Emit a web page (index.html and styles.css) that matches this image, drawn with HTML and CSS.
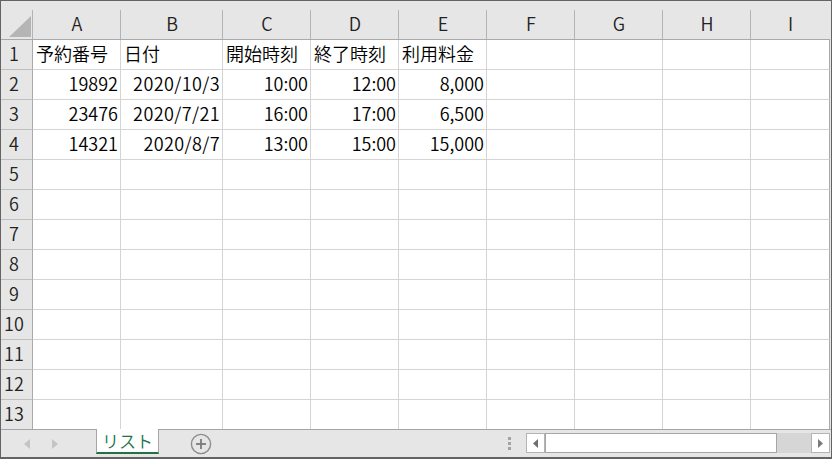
FILE: index.html
```html
<!DOCTYPE html>
<html lang="ja">
<head>
<meta charset="utf-8">
<title>リスト</title>
<link rel="stylesheet" href="styles.css">
</head>
<body>
<div class="window">
  <div class="sheet">
    <div class="corner"><svg class="tri" width="22" height="21" viewBox="0 0 22 21"><polygon points="0,21 22,0 22,21" fill="#b5b5b5"/></svg></div>
    <div class="ch">A</div><div class="ch">B</div><div class="ch">C</div><div class="ch">D</div><div class="ch">E</div><div class="ch">F</div><div class="ch">G</div><div class="ch">H</div><div class="ch last-col">I</div>

    <div class="rh">1</div><div class="c">予約番号</div><div class="c">日付</div><div class="c">開始時刻</div><div class="c">終了時刻</div><div class="c">利用料金</div><div class="c"></div><div class="c"></div><div class="c"></div><div class="c end"></div>
    <div class="rh">2</div><div class="c n">19892</div><div class="c n date">2020/10/3</div><div class="c n">10:00</div><div class="c n">12:00</div><div class="c n">8,000</div><div class="c"></div><div class="c"></div><div class="c"></div><div class="c end"></div>
    <div class="rh">3</div><div class="c n">23476</div><div class="c n date">2020/7/21</div><div class="c n">16:00</div><div class="c n">17:00</div><div class="c n">6,500</div><div class="c"></div><div class="c"></div><div class="c"></div><div class="c end"></div>
    <div class="rh">4</div><div class="c n">14321</div><div class="c n date">2020/8/7</div><div class="c n">13:00</div><div class="c n">15:00</div><div class="c n">15,000</div><div class="c"></div><div class="c"></div><div class="c"></div><div class="c end"></div>
    <div class="rh">5</div><div class="c"></div><div class="c"></div><div class="c"></div><div class="c"></div><div class="c"></div><div class="c"></div><div class="c"></div><div class="c"></div><div class="c end"></div>
    <div class="rh">6</div><div class="c"></div><div class="c"></div><div class="c"></div><div class="c"></div><div class="c"></div><div class="c"></div><div class="c"></div><div class="c"></div><div class="c end"></div>
    <div class="rh">7</div><div class="c"></div><div class="c"></div><div class="c"></div><div class="c"></div><div class="c"></div><div class="c"></div><div class="c"></div><div class="c"></div><div class="c end"></div>
    <div class="rh">8</div><div class="c"></div><div class="c"></div><div class="c"></div><div class="c"></div><div class="c"></div><div class="c"></div><div class="c"></div><div class="c"></div><div class="c end"></div>
    <div class="rh">9</div><div class="c"></div><div class="c"></div><div class="c"></div><div class="c"></div><div class="c"></div><div class="c"></div><div class="c"></div><div class="c"></div><div class="c end"></div>
    <div class="rh">10</div><div class="c"></div><div class="c"></div><div class="c"></div><div class="c"></div><div class="c"></div><div class="c"></div><div class="c"></div><div class="c"></div><div class="c end"></div>
    <div class="rh">11</div><div class="c"></div><div class="c"></div><div class="c"></div><div class="c"></div><div class="c"></div><div class="c"></div><div class="c"></div><div class="c"></div><div class="c end"></div>
    <div class="rh">12</div><div class="c"></div><div class="c"></div><div class="c"></div><div class="c"></div><div class="c"></div><div class="c"></div><div class="c"></div><div class="c"></div><div class="c end"></div>
    <div class="rh bottom">13</div><div class="c bottom"></div><div class="c bottom"></div><div class="c bottom"></div><div class="c bottom"></div><div class="c bottom"></div><div class="c bottom"></div><div class="c bottom"></div><div class="c bottom"></div><div class="c end bottom"></div>
  </div>

  <div class="bar">
    <div class="nav">
      <svg width="6" height="10" viewBox="0 0 6 10"><polygon points="6,0 0,5 6,10" fill="#c4c4c4"/></svg>
      <svg width="6" height="10" viewBox="0 0 6 10"><polygon points="0,0 6,5 0,10" fill="#c4c4c4"/></svg>
    </div>
    <div class="tab">リスト</div>
    <svg class="add" width="22" height="22" viewBox="0 0 22 22">
      <circle cx="11" cy="11" r="9.6" fill="none" stroke="#8c8c8c" stroke-width="1.4"/>
      <line x1="6" y1="11" x2="16" y2="11" stroke="#7a7a7a" stroke-width="1.8"/>
      <line x1="11" y1="6" x2="11" y2="16" stroke="#7a7a7a" stroke-width="1.8"/>
    </svg>
    <div class="spacer"></div>
    <div class="dots"><span></span><span></span><span></span></div>
    <div class="hscroll">
      <div class="sbtn"><svg width="5" height="9" viewBox="0 0 5 9"><polygon points="5,0 0,4.5 5,9" fill="#6f6f6f"/></svg></div>
      <div class="track"><div class="thumb"></div></div>
      <div class="sbtn"><svg width="5" height="9" viewBox="0 0 5 9"><polygon points="0,0 5,4.5 0,9" fill="#7a7a7a"/></svg></div>
    </div>
  </div>
</div>
</body>
</html>
```
FILE: styles.css
```css
* { box-sizing: border-box; }
html, body { margin: 0; padding: 0; }
body {
  width: 832px;
  height: 459px;
  overflow: hidden;
  background: #e6e6e6;
  font-family: "Noto Sans CJK JP", "Noto Sans", sans-serif;
  font-weight: 350;
}
.window {
  width: 832px;
  height: 459px;
  border: 1px solid #646464;
  border-bottom-width: 2px;
  background: #e6e6e6;
  display: flex;
  flex-direction: column;
}
.sheet {
  display: grid;
  grid-template-columns: 32px 88px 102px repeat(6, 88px) 79px;
  grid-template-rows: 39px repeat(12, 30px) 29px;
  width: 829px;
}
.corner {
  background: #e6e6e6 linear-gradient(#b3b3b3, #b3b3b3) right bottom / 1px 29px no-repeat;
  border-bottom: 1px solid #a9a9a9;
  display: flex;
  align-items: flex-end;
  justify-content: flex-end;
  padding: 0 2px 2px 0;
}
.tri { display: block; }
.ch {
  background: #e6e6e6 linear-gradient(#b3b3b3, #b3b3b3) right bottom / 1px 29px no-repeat;
  border-bottom: 1px solid #a9a9a9;
  text-align: center;
  font-size: 18px;
  line-height: 31px;
  padding-top: 7px;
  color: #222;
}
.ch.last-col { background: #e6e6e6; }
.rh {
  background: #e6e6e6;
  border-right: 1px solid #a9a9a9;
  border-bottom: 1px solid #bfbfbf;
  font-size: 18px;
  line-height: 27px;
  padding: 0 5px 2px 0;
  text-align: center;
  color: #222;
}
.c {
  background: #fff;
  border-right: 1px solid #d4d4d4;
  border-bottom: 1px solid #d4d4d4;
  font-size: 18px;
  line-height: 27px;
  padding: 0 2px 2px 3px;
  white-space: nowrap;
  overflow: hidden;
  color: #000;
}
.c.n { text-align: right; }
.c.date { letter-spacing: 0.4px; }
.c.end { border-right-color: #a9a9a9; }
.bottom { border-bottom: none; }

.bar {
  height: 28px;
  border-top: 1px solid #a6a6a6;
  display: flex;
  align-items: center;
  padding-right: 1px;
}
.nav {
  width: 95px;
  display: flex;
  align-items: center;
  gap: 22px;
  padding-left: 23px;
}
.nav svg { display: block; }
.tab {
  align-self: flex-start;
  margin-top: -1px;
  width: 63px;
  height: 25px;
  background: #fff;
  border-left: 1px solid #a6a6a6;
  border-right: 1px solid #a6a6a6;
  border-bottom: 2px solid #217346;
  color: #217346;
  font-size: 17px;
  line-height: 21px;
  text-align: center;
  padding-top: 1px;
}
.add { display: block; margin-left: 31px; }
.spacer { flex: 1; }
.dots {
  width: 3px;
  margin-right: 15px;
  display: flex;
  flex-direction: column;
  gap: 2px;
}
.dots span { display: block; width: 3px; height: 3px; background: #a3a3a3; }
.hscroll {
  width: 304px;
  height: 20px;
  display: flex;
  align-self: flex-start;
  margin-top: 3px;
}
.sbtn {
  width: 19px;
  height: 20px;
  background: #fff;
  border: 1px solid #b4b4b4;
  display: flex;
  align-items: center;
  justify-content: center;
}
.sbtn svg { display: block; }
.track {
  flex: 1;
  background: #d6d6d6;
  display: flex;
}
.thumb {
  width: 232px;
  height: 20px;
  background: #fff;
  border: 1px solid #a6a6a6;
}
```
